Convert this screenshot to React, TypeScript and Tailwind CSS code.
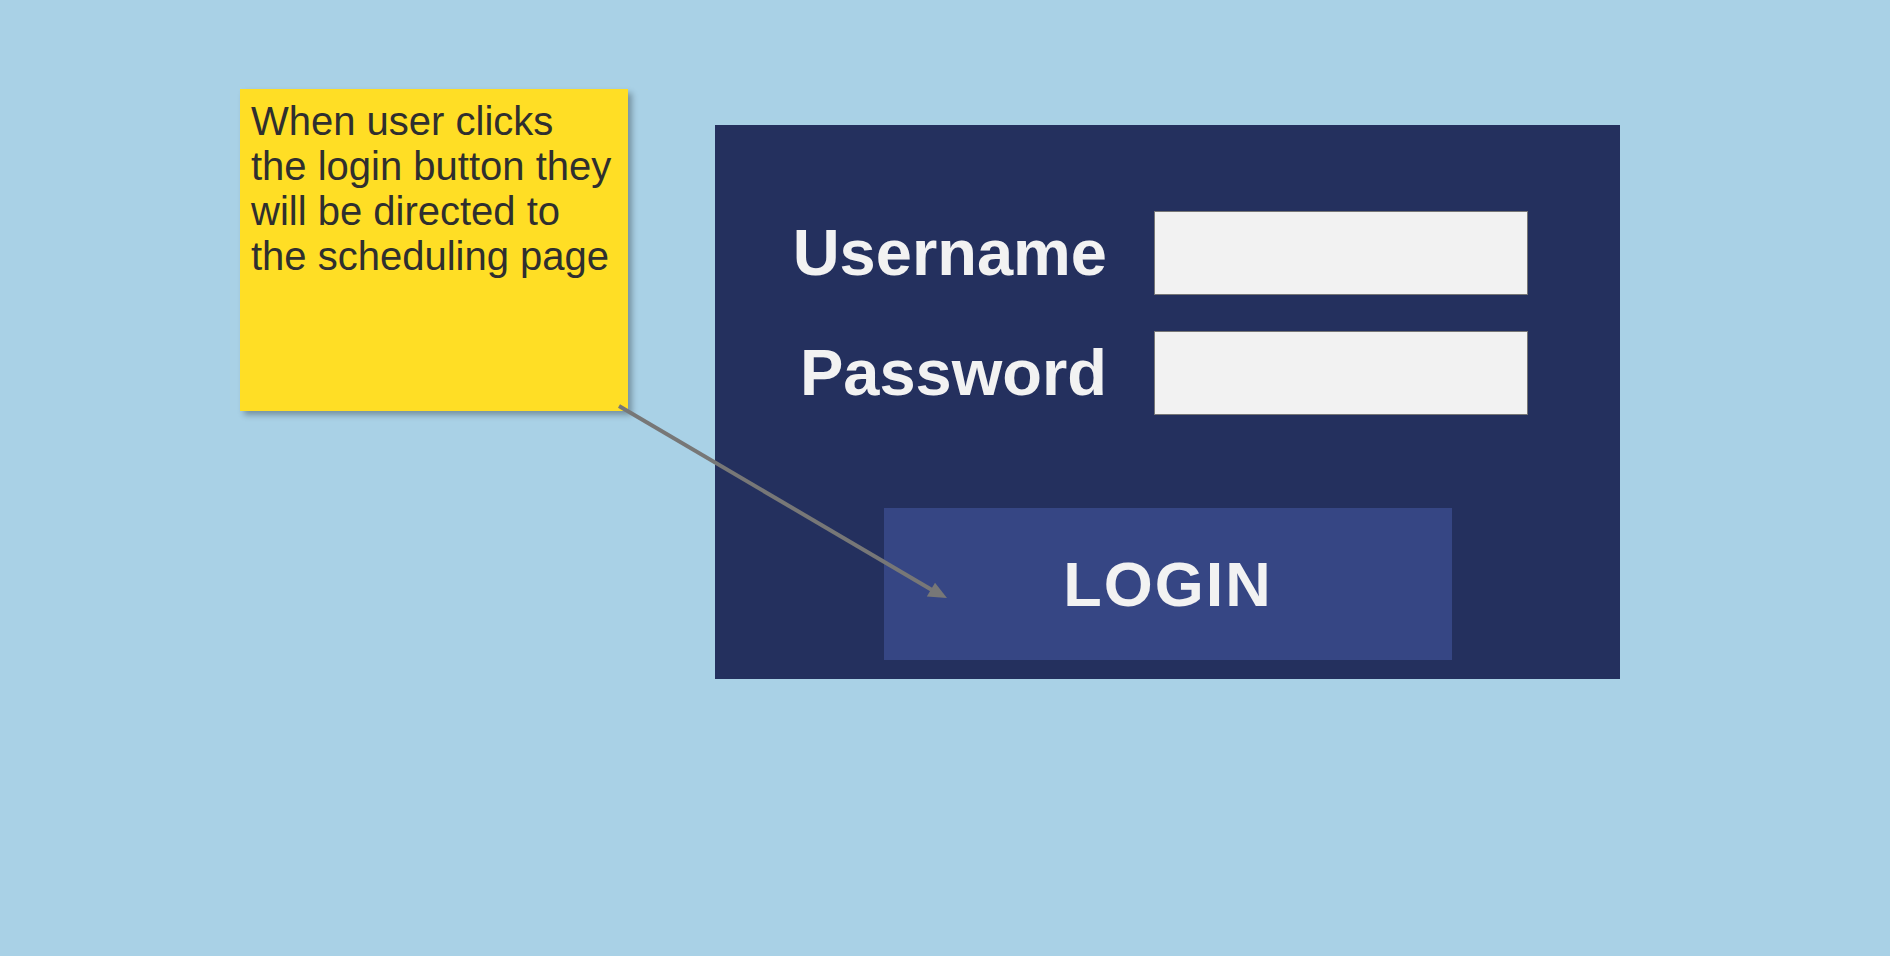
import React from 'react';

const font = { fontFamily: '"Liberation Sans", Arial, sans-serif' };

const StickyNote = () => (
  <div className="w-[388px] h-[322px] shrink-0 bg-[#ffde25] pl-[11px] pt-[10px] shadow-[4px_4px_6px_rgba(0,0,0,0.3)]">
    <p className="text-[40px] leading-[45px] text-[#2f2f2f]">
      When user clicks
      <br />
      the login button they
      <br />
      will be directed to
      <br />
      the scheduling page
    </p>
  </div>
);

const Field = ({ label, type }: { label: string; type: string }) => (
  <>
    <label className="text-right text-[65px] font-bold leading-[84px] text-[#f2f2f2]">
      {label}
    </label>
    <input
      type={type}
      className="h-[84px] w-[374px] border border-[#767676] bg-[#f2f2f2] outline-none"
    />
  </>
);

const Arrow = () => (
  <svg
    className="pointer-events-none absolute left-0 top-0"
    width={1890}
    height={956}
  >
    <line
      x1={619}
      y1={406}
      x2={932}
      y2={590}
      stroke="#777777"
      strokeWidth={4}
    />
    <polygon points="947,598 926.8,596.5 935,582.7" fill="#777777" />
  </svg>
);

export default function App() {
  return (
    <div
      className="relative flex min-h-screen w-full items-start bg-[#a9d1e6] pl-[240px] pt-[89px]"
      style={font}
    >
      <StickyNote />

      <div className="ml-[87px] mt-[36px] flex h-[554px] w-[905px] flex-col bg-[#24305e] pt-[86px]">
        <div className="grid grid-cols-[392px_374px] gap-x-[47px] gap-y-[36px]">
          <Field label="Username" type="text" />
          <Field label="Password" type="password" />
        </div>

        <button className="ml-[169px] mt-[93px] flex h-[152px] w-[568px] items-center justify-center bg-[#364684] text-[63px] font-bold tracking-[2px] text-[#f2f2f2]">
          LOGIN
        </button>
      </div>

      <Arrow />
    </div>
  );
}
